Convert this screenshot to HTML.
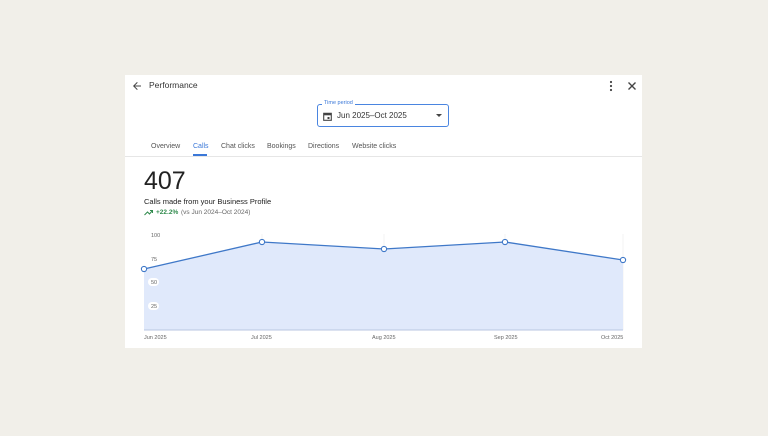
<!DOCTYPE html><html><head><style>
body{margin:0;width:768px;height:436px;background:#f1efe9;font-family:"Liberation Sans",sans-serif;position:relative;overflow:hidden}
.card{position:absolute;left:125px;top:75px;width:517px;height:273px;background:#fff}
.t{position:absolute;white-space:nowrap}
</style></head><body>
<div class="card">
<svg class="t" style="left:6px;top:5px" width="12" height="12" viewBox="0 0 24 24"><path d="M20 11H7.8l5.6-5.6L12 4l-8 8 8 8 1.4-1.4L7.8 13H20z" fill="#444"/></svg>
<div class="t" style="left:24px;top:5px;font-size:8.5px;color:#333">Performance</div>
<svg class="t" style="left:481px;top:5px" width="10" height="12" viewBox="0 0 10 12"><circle cx="5" cy="2" r="1.1" fill="#444"/><circle cx="5" cy="6" r="1.1" fill="#444"/><circle cx="5" cy="10" r="1.1" fill="#444"/></svg>
<svg class="t" style="left:502px;top:6px" width="10" height="10" viewBox="0 0 10 10"><path d="M1.5 1.5l7 7M8.5 1.5l-7 7" stroke="#444" stroke-width="1.4"/></svg>
<div class="t" style="left:192px;top:29px;width:130px;height:21px;border:1.5px solid #4a85e0;border-radius:3px"></div>
<div class="t" style="left:197px;top:25px;font-size:5.5px;color:#3b78d8;background:#fff;padding:0 2px">Time period</div>
<svg class="t" style="left:198px;top:37px" width="9" height="9" viewBox="0 0 9 9"><rect x="0.7" y="1.3" width="7.6" height="7" fill="none" stroke="#444" stroke-width="1.1"/><rect x="0.7" y="1.3" width="7.6" height="2" fill="#444"/><rect x="4.5" y="5" width="2" height="2" fill="#444"/></svg>
<div class="t" style="left:212px;top:36px;font-size:8px;color:#333">Jun 2025–Oct 2025</div>
<svg class="t" style="left:311px;top:39px" width="6" height="4"><path d="M0 0h6L3 3z" fill="#444"/></svg>
<div class="t" style="left:26px;top:68px;font-size:7px;color:#555">Overview</div>
<div class="t" style="left:68px;top:68px;font-size:7px;color:#3b78d8">Calls</div>
<div class="t" style="left:68px;top:79px;width:14px;height:2px;background:#3b78d8"></div>
<div class="t" style="left:96px;top:68px;font-size:7px;color:#555">Chat clicks</div>
<div class="t" style="left:142px;top:68px;font-size:7px;color:#555">Bookings</div>
<div class="t" style="left:183px;top:68px;font-size:7px;color:#555">Directions</div>
<div class="t" style="left:227px;top:68px;font-size:7px;color:#555">Website clicks</div>
<div class="t" style="left:0;top:81px;width:517px;height:1px;background:#e6e6e6"></div>
<div class="t" style="left:19px;top:92px;font-size:25px;color:#222">407</div>
<div class="t" style="left:19px;top:122px;font-size:7.5px;color:#222">Calls made from your Business Profile</div>
<svg class="t" style="left:19px;top:134px" width="9" height="7" viewBox="0 0 9 7"><path d="M0.5 6l3-3 2 2 3-3.5M6 1.5h2.5V4" stroke="#2f8a4c" fill="none" stroke-width="1"/></svg>
<div class="t" style="left:31px;top:134px;font-size:6.5px;color:#2f8a4c;font-weight:bold">+22.2%</div>
<div class="t" style="left:56px;top:134px;font-size:6.5px;color:#666">(vs Jun 2024–Oct 2024)</div>
</div>
<svg style="position:absolute;left:0;top:0" width="768" height="436">
<g stroke="#eee" stroke-width="0.7"><line x1="262" y1="234" x2="262" y2="330"/><line x1="384" y1="234" x2="384" y2="330"/><line x1="505" y1="234" x2="505" y2="330"/><line x1="623" y1="234" x2="623" y2="330"/></g>
<path d="M144 269L262 242L384 249L505 242L623 260L623 330L144 330Z" fill="#e0e9fb"/>
<line x1="144" y1="330" x2="623" y2="330" stroke="#b8c6e0" stroke-width="1"/>
<path d="M144 269L262 242L384 249L505 242L623 260" fill="none" stroke="#3f78c8" stroke-width="1.3"/>
<g fill="#fff" stroke="#3f78c8" stroke-width="1.1"><circle cx="144" cy="269" r="2.6"/><circle cx="262" cy="242" r="2.6"/><circle cx="384" cy="249" r="2.6"/><circle cx="505" cy="242" r="2.6"/><circle cx="623" cy="260" r="2.6"/></g>
<g font-family="Liberation Sans" font-size="5.5" fill="#666"><text x="151" y="237">100</text><text x="151" y="261">75</text>
<rect x="148" y="278" width="11" height="8" rx="4" fill="#fff"/><text x="151" y="284">50</text>
<rect x="148" y="302" width="11" height="8" rx="4" fill="#fff"/><text x="151" y="308">25</text>
<text x="144" y="339">Jun 2025</text><text x="251" y="339">Jul 2025</text><text x="372" y="339">Aug 2025</text><text x="494" y="339">Sep 2025</text><text x="601" y="339">Oct 2025</text></g>
</svg>
</body></html>
